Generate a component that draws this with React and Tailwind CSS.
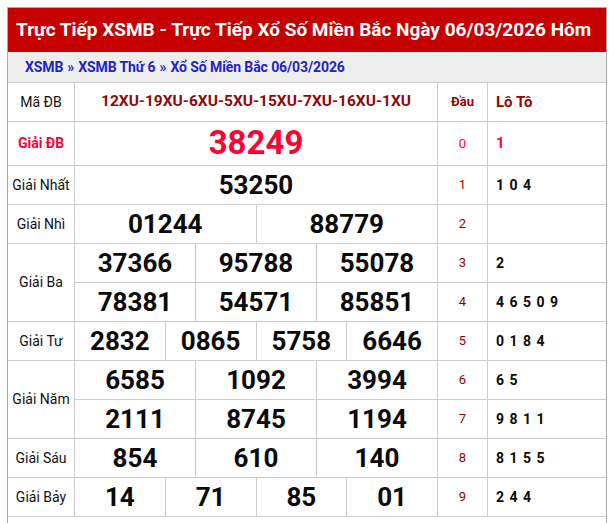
import React from 'react';

const font = { fontFamily: 'Roboto, "Noto Sans", sans-serif' };

const prizes = [
  { label: 'Giải ĐB', rows: [['38249']], special: true },
  { label: 'Giải Nhất', rows: [['53250']] },
  { label: 'Giải Nhì', rows: [['01244', '88779']] },
  { label: 'Giải Ba', rows: [['37366', '95788', '55078'], ['78381', '54571', '85851']] },
  { label: 'Giải Tư', rows: [['2832', '0865', '5758', '6646']] },
  { label: 'Giải Năm', rows: [['6585', '1092', '3994'], ['2111', '8745', '1194']] },
  { label: 'Giải Sáu', rows: [['854', '610', '140']] },
  { label: 'Giải Bảy', rows: [['14', '71', '85', '01']] },
];

const loto = ['1', '104', '', '2', '46509', '0184', '65', '9811', '8155', '244'];

// span classes for 12-column number area
const spanFor = { 1: 'col-span-12', 2: 'col-span-6', 3: 'col-span-4', 4: 'col-span-3' };

export default function App() {
  let dau = 0;
  const cells = [];

  prizes.forEach((p, pi) => {
    cells.push(
      <div
        key={'l' + pi}
        className={`bg-white flex items-center justify-center text-[14px] ${p.rows.length === 2 ? 'row-span-2' : ''} ${p.special ? 'text-[#ff0033] font-bold' : 'text-[#111]'}`}
      >
        {p.label}
      </div>
    );
    p.rows.forEach((row, ri) => {
      row.forEach((n, ni) => {
        cells.push(
          <div
            key={`n${pi}-${ri}-${ni}`}
            className={`bg-white flex items-center justify-center font-bold leading-none ${spanFor[row.length]} ${p.special ? 'text-[33px] text-[#ff0033] pb-[3px]' : 'text-[26px] text-[#0a0a0a]'}`}
          >
            {n}
          </div>
        );
      });
      const d = dau;
      cells.push(
        <div
          key={'d' + d}
          className={`bg-white flex items-center justify-center text-[13px] ${d === 0 ? 'text-[#ff0033]' : 'text-[#9b0000]'}`}
        >
          {d}
        </div>
      );
      cells.push(
        <div
          key={'t' + d}
          className={`bg-white flex items-center pl-2 font-bold tracking-[1px] ${d === 0 ? 'text-[15px] text-[#ff0033]' : 'text-[14px] text-[#0a0a0a]'}`}
        >
          {loto[d].split('').join(' ')}
        </div>
      );
      dau++;
    });
  });

  return (
    <div className="h-screen overflow-hidden bg-white pt-[7px]" style={font}>
      <div className="ml-[7px] w-[600px] h-[516px] border-t border-l border-r border-[#aaa]">
        {/* Title */}
        <div className="h-[44px] bg-[#c60000] flex items-center pl-2 overflow-hidden whitespace-nowrap">
          <h1 className="text-white font-bold text-[19px]">
            Trực Tiếp XSMB - Trực Tiếp Xổ Số Miền Bắc Ngày 06/03/2026 Hôm
          </h1>
        </div>

        {/* Breadcrumb */}
        <div className="h-[30px] bg-[#eeeeee] flex items-center pl-[17px] text-[14px] font-bold text-[#2222cc] tracking-[-0.1px]">
          <span>XSMB</span>
          <span className="mx-1">»</span>
          <span>XSMB Thứ 6</span>
          <span className="mx-1">»</span>
          <span>Xổ Số Miền Bắc 06/03/2026</span>
        </div>

        {/* Result table */}
        <div className="grid grid-cols-[66px_repeat(12,minmax(0,1fr))_49px_118px] grid-rows-[38px_43px_repeat(9,38px)] gap-px bg-[#cccccc] py-px">
          <div className="bg-white flex items-center justify-center text-[14px] text-[#111]">Mã ĐB</div>
          <div className="bg-white col-span-12 flex items-center justify-center font-bold text-[15.5px] text-[#8e0a0a]">
            12XU-19XU-6XU-5XU-15XU-7XU-16XU-1XU
          </div>
          <div className="bg-white flex items-center justify-center font-bold text-[13px] text-[#9b0000]">Đầu</div>
          <div className="bg-white flex items-center pl-2 font-bold text-[15px] text-[#9b0000]">Lô Tô</div>
          {cells}
        </div>
      </div>
    </div>
  );
}
